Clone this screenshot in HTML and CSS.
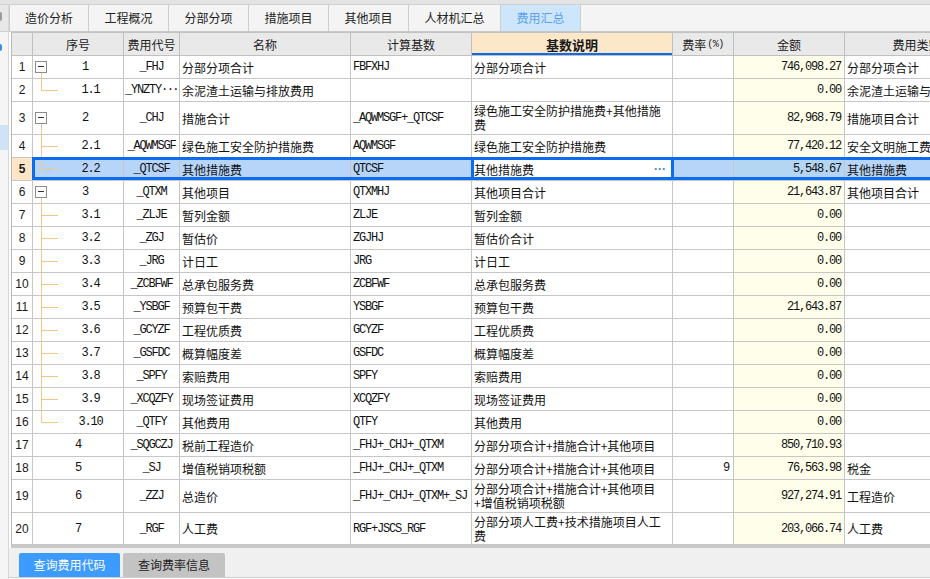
FILE: index.html
```html
<!DOCTYPE html>
<html lang="zh">
<head>
<meta charset="utf-8">
<title>费用汇总</title>
<link rel="stylesheet" href="styles.css">
</head>
<body>
<div class="topstrip"></div>
<div class="layout">
  <aside class="side">
    <div class="side-top"><span class="side-knob"></span></div>
    <span class="side-dot"></span>
    <span class="side-sel"></span>
  </aside>
  <main class="main">
    <nav class="tabbar">
      <div class="tab t80 first">造价分析</div>
      <div class="tab t80">工程概况</div>
      <div class="tab t80">分部分项</div>
      <div class="tab t80">措施项目</div>
      <div class="tab t80">其他项目</div>
      <div class="tab t92">人材机汇总</div>
      <div class="tab t80 active">费用汇总</div>
    </nav>
    <section class="grid">
      <div class="row head">
        <div class="c rh"></div>
        <div class="c hc">序号</div>
        <div class="c hc">费用代号</div>
        <div class="c hc">名称</div>
        <div class="c hc">计算基数</div>
        <div class="c hc focus">基数说明</div>
        <div class="c hc">费率<span class="pct">(%)</span></div>
        <div class="c hc">金额</div>
        <div class="c hc">费用类别</div>
      </div>

      <div class="row">
        <div class="c rh">1</div>
        <div class="c tree open"><span class="tg"></span><span class="sn">1</span></div>
        <div class="c code">_FHJ</div>
        <div class="c name">分部分项合计</div>
        <div class="c base">FBFXHJ</div>
        <div class="c desc">分部分项合计</div>
        <div class="c rate"></div>
        <div class="c amt">746,098.27</div>
        <div class="c type">分部分项合计</div>
      </div>
      <div class="row">
        <div class="c rh">2</div>
        <div class="c tree"><span class="br last"></span><span class="sn">1.1</span></div>
        <div class="c code">_YNZTY<span class="dots">···</span></div>
        <div class="c name">余泥渣土运输与排放费用</div>
        <div class="c base"></div>
        <div class="c desc"></div>
        <div class="c rate"></div>
        <div class="c amt">0.00</div>
        <div class="c type">余泥渣土运输与排放费用</div>
      </div>
      <div class="row tall">
        <div class="c rh">3</div>
        <div class="c tree open"><span class="tg"></span><span class="sn">2</span></div>
        <div class="c code">_CHJ</div>
        <div class="c name">措施合计</div>
        <div class="c base">_AQWMSGF+_QTCSF</div>
        <div class="c desc multi">绿色施工安全防护措施费+其他措施<br>费</div>
        <div class="c rate"></div>
        <div class="c amt">82,968.79</div>
        <div class="c type">措施项目合计</div>
      </div>
      <div class="row">
        <div class="c rh">4</div>
        <div class="c tree"><span class="br"></span><span class="sn">2.1</span></div>
        <div class="c code">_AQWMSGF</div>
        <div class="c name">绿色施工安全防护措施费</div>
        <div class="c base">AQWMSGF</div>
        <div class="c desc">绿色施工安全防护措施费</div>
        <div class="c rate"></div>
        <div class="c amt">77,420.12</div>
        <div class="c type">安全文明施工费</div>
      </div>
      <div class="row sel">
        <div class="c rh">5</div>
        <div class="c tree"><span class="br last"></span><span class="sn">2.2</span></div>
        <div class="c code">_QTCSF</div>
        <div class="c name">其他措施费</div>
        <div class="c base">QTCSF</div>
        <div class="c desc edit"><span class="tx">其他措施费</span><span class="more">···</span></div>
        <div class="c rate"></div>
        <div class="c amt">5,548.67</div>
        <div class="c type">其他措施费</div>
      </div>
      <div class="row">
        <div class="c rh">6</div>
        <div class="c tree open"><span class="tg"></span><span class="sn">3</span></div>
        <div class="c code">_QTXM</div>
        <div class="c name">其他项目</div>
        <div class="c base">QTXMHJ</div>
        <div class="c desc">其他项目合计</div>
        <div class="c rate"></div>
        <div class="c amt">21,643.87</div>
        <div class="c type">其他项目合计</div>
      </div>
      <div class="row">
        <div class="c rh">7</div>
        <div class="c tree"><span class="br"></span><span class="sn">3.1</span></div>
        <div class="c code">_ZLJE</div>
        <div class="c name">暂列金额</div>
        <div class="c base">ZLJE</div>
        <div class="c desc">暂列金额</div>
        <div class="c rate"></div>
        <div class="c amt">0.00</div>
        <div class="c type"></div>
      </div>
      <div class="row">
        <div class="c rh">8</div>
        <div class="c tree"><span class="br"></span><span class="sn">3.2</span></div>
        <div class="c code">_ZGJ</div>
        <div class="c name">暂估价</div>
        <div class="c base">ZGJHJ</div>
        <div class="c desc">暂估价合计</div>
        <div class="c rate"></div>
        <div class="c amt">0.00</div>
        <div class="c type"></div>
      </div>
      <div class="row">
        <div class="c rh">9</div>
        <div class="c tree"><span class="br"></span><span class="sn">3.3</span></div>
        <div class="c code">_JRG</div>
        <div class="c name">计日工</div>
        <div class="c base">JRG</div>
        <div class="c desc">计日工</div>
        <div class="c rate"></div>
        <div class="c amt">0.00</div>
        <div class="c type"></div>
      </div>
      <div class="row">
        <div class="c rh">10</div>
        <div class="c tree"><span class="br"></span><span class="sn">3.4</span></div>
        <div class="c code">_ZCBFWF</div>
        <div class="c name">总承包服务费</div>
        <div class="c base">ZCBFWF</div>
        <div class="c desc">总承包服务费</div>
        <div class="c rate"></div>
        <div class="c amt">0.00</div>
        <div class="c type"></div>
      </div>
      <div class="row">
        <div class="c rh">11</div>
        <div class="c tree"><span class="br"></span><span class="sn">3.5</span></div>
        <div class="c code">_YSBGF</div>
        <div class="c name">预算包干费</div>
        <div class="c base">YSBGF</div>
        <div class="c desc">预算包干费</div>
        <div class="c rate"></div>
        <div class="c amt">21,643.87</div>
        <div class="c type"></div>
      </div>
      <div class="row">
        <div class="c rh">12</div>
        <div class="c tree"><span class="br"></span><span class="sn">3.6</span></div>
        <div class="c code">_GCYZF</div>
        <div class="c name">工程优质费</div>
        <div class="c base">GCYZF</div>
        <div class="c desc">工程优质费</div>
        <div class="c rate"></div>
        <div class="c amt">0.00</div>
        <div class="c type"></div>
      </div>
      <div class="row">
        <div class="c rh">13</div>
        <div class="c tree"><span class="br"></span><span class="sn">3.7</span></div>
        <div class="c code">_GSFDC</div>
        <div class="c name">概算幅度差</div>
        <div class="c base">GSFDC</div>
        <div class="c desc">概算幅度差</div>
        <div class="c rate"></div>
        <div class="c amt">0.00</div>
        <div class="c type"></div>
      </div>
      <div class="row">
        <div class="c rh">14</div>
        <div class="c tree"><span class="br"></span><span class="sn">3.8</span></div>
        <div class="c code">_SPFY</div>
        <div class="c name">索赔费用</div>
        <div class="c base">SPFY</div>
        <div class="c desc">索赔费用</div>
        <div class="c rate"></div>
        <div class="c amt">0.00</div>
        <div class="c type"></div>
      </div>
      <div class="row">
        <div class="c rh">15</div>
        <div class="c tree"><span class="br"></span><span class="sn">3.9</span></div>
        <div class="c code">_XCQZFY</div>
        <div class="c name">现场签证费用</div>
        <div class="c base">XCQZFY</div>
        <div class="c desc">现场签证费用</div>
        <div class="c rate"></div>
        <div class="c amt">0.00</div>
        <div class="c type"></div>
      </div>
      <div class="row">
        <div class="c rh">16</div>
        <div class="c tree"><span class="br last"></span><span class="sn">3.10</span></div>
        <div class="c code">_QTFY</div>
        <div class="c name">其他费用</div>
        <div class="c base">QTFY</div>
        <div class="c desc">其他费用</div>
        <div class="c rate"></div>
        <div class="c amt">0.00</div>
        <div class="c type"></div>
      </div>
      <div class="row">
        <div class="c rh">17</div>
        <div class="c tree"><span class="sn">4</span></div>
        <div class="c code">_SQGCZJ</div>
        <div class="c name">税前工程造价</div>
        <div class="c base">_FHJ+_CHJ+_QTXM</div>
        <div class="c desc">分部分项合计+措施合计+其他项目</div>
        <div class="c rate"></div>
        <div class="c amt">850,710.93</div>
        <div class="c type"></div>
      </div>
      <div class="row">
        <div class="c rh">18</div>
        <div class="c tree"><span class="sn">5</span></div>
        <div class="c code">_SJ</div>
        <div class="c name">增值税销项税额</div>
        <div class="c base">_FHJ+_CHJ+_QTXM</div>
        <div class="c desc">分部分项合计+措施合计+其他项目</div>
        <div class="c rate">9</div>
        <div class="c amt">76,563.98</div>
        <div class="c type">税金</div>
      </div>
      <div class="row tall">
        <div class="c rh">19</div>
        <div class="c tree"><span class="sn">6</span></div>
        <div class="c code">_ZZJ</div>
        <div class="c name">总造价</div>
        <div class="c base">_FHJ+_CHJ+_QTXM+_SJ</div>
        <div class="c desc multi">分部分项合计+措施合计+其他项目<br>+增值税销项税额</div>
        <div class="c rate"></div>
        <div class="c amt">927,274.91</div>
        <div class="c type">工程造价</div>
      </div>
      <div class="row tall2">
        <div class="c rh">20</div>
        <div class="c tree"><span class="sn">7</span></div>
        <div class="c code">_RGF</div>
        <div class="c name">人工费</div>
        <div class="c base">RGF+JSCS_RGF</div>
        <div class="c desc multi">分部分项人工费+技术措施项目人工<br>费</div>
        <div class="c rate"></div>
        <div class="c amt">203,066.74</div>
        <div class="c type">人工费</div>
      </div>
    </section>
    <div class="hscroll"></div>
    <footer class="bottom">
      <div class="btab on">查询费用代码</div>
      <div class="btab">查询费率信息</div>
    </footer>
  </main>
</div>
</body>
</html>
```
FILE: styles.css
```css
* { box-sizing: border-box; }
html, body { margin: 0; padding: 0; }
body {
  width: 930px;
  height: 579px;
  overflow: hidden;
  background: #fafafa;
  font-family: "Noto Sans CJK SC", "Noto Sans", sans-serif;
  font-size: 12px;
  color: #111;
}
.topstrip { height: 4px; background: #e3e3e3; }
.layout { display: flex; height: 575px; }

/* left side strip */
.side {
  width: 9px;
  flex: none;
  border-right: 1px solid #d6d6d6;
  background: #f5f5f5;
  display: flex;
  flex-direction: column;
}
.side-top {
  height: 28px;
  border-top: 1px solid #d0d0d0;
  border-bottom: 1px solid #d0d0d0;
  background: #e8e8e8;
}
.side-knob {
  display: block;
  margin-top: 7px;
  width: 2px;
  height: 9px;
  background: #9a9a9a;
  border-radius: 0 2px 2px 0;
}
.side-dot {
  display: block;
  margin-top: 12px;
  width: 2px;
  height: 7px;
  background: #3b8fe0;
  border-radius: 0 2px 2px 0;
}
.side-sel {
  display: block;
  margin-top: 74px;
  width: 8px;
  height: 25px;
  background: #cfe3f7;
}

.main {
  flex: 1;
  min-width: 0;
  display: flex;
  flex-direction: column;
  background: #fff;
}

/* top tabs */
.tabbar {
  height: 28px;
  flex: none;
  display: flex;
  background: #f4f4f4;
  border-top: 1px solid #d0d0d0;
  border-bottom: 1px solid #c9c9c9;
}
.tab {
  height: 26px;
  line-height: 26px;
  text-align: center;
  color: #222;
  border-right: 1px solid #cdcdcd;
  font-size: 12px;
}
.tab.first { border-left: 1px solid #cdcdcd; }
.t80 { width: 80px; }
.t92 { width: 92px; }
.tab.active { background: #cde6fb; color: #5aa0ec; }

/* grid */
.grid {
  margin-left: 2px;
  border-left: 1px solid #b8b8b8;
  border-top: 1px solid #c2c2c2;
  overflow: hidden;
  flex: none;
}
.row {
  display: grid;
  grid-template-columns: 21px 91px 56px 171px 121px 201px 61px 111px 144px;
  width: max-content;
  height: 23px;
  position: relative;
}
.row.tall { height: 33px; }
.row.tall2 { height: 32px; }
.c {
  border-right: 1px solid #c6c6c6;
  border-bottom: 1px solid #c6c6c6;
  display: flex;
  align-items: center;
  white-space: nowrap;
  overflow: hidden;
  padding: 0 2px;
  min-width: 0;
}
.head .c { background: #e9e9e9; color: #222; justify-content: center; border-color: #c0c0c0; }
.head .focus {
  background: #fde7c9;
  font-weight: bold;
  font-size: 13px;
  color: #1a1a1a;
  box-shadow: inset 0 -2px 0 #0b6cf0;
}
.pct { font-family: "Liberation Mono", monospace; font-size: 10px; margin-left: 1px; letter-spacing: -0.5px; }

.rh {
  justify-content: center;
  padding: 0;
  font-family: "Liberation Sans", "DejaVu Sans", sans-serif;
  font-size: 12px;
  color: #1a1a1a;
}
.code, .base, .amt, .sn, .rate {
  font-family: "Liberation Mono", monospace;
  font-size: 12px;
  letter-spacing: -1.2px;
}
.code { justify-content: center; }
.dots { letter-spacing: -1.5px; }
.amt { justify-content: flex-end; background: #fffeea; padding-right: 3px; }
.rate { justify-content: flex-end; padding-right: 4px; }
.multi { white-space: normal; line-height: 14px; }

/* tree column */
.tree { padding: 0; position: relative; align-items: stretch; }
.sn { flex: 1; display: flex; align-items: center; justify-content: center; }
.tg {
  align-self: center;
  margin-left: 2px;
  width: 12px;
  height: 12px;
  border: 1px solid #8c8c8c;
  background: #fff;
  position: relative;
  flex: none;
}
.tg::before {
  content: "";
  position: absolute;
  left: 2px;
  right: 2px;
  top: 4px;
  height: 1px;
  background: #333;
}
.open::after {
  content: "";
  position: absolute;
  left: 8px;
  top: calc(50% + 6px);
  bottom: -1px;
  width: 1px;
  background: #f7c585;
}
.br { width: 25px; flex: none; position: relative; }
.br::before {
  content: "";
  position: absolute;
  left: 8px;
  top: 0;
  bottom: -1px;
  width: 1px;
  background: #f7c585;
}
.br.last::before { bottom: auto; height: 50%; }
.br::after {
  content: "";
  position: absolute;
  left: 8px;
  width: 17px;
  top: 50%;
  height: 1px;
  background: #f7c585;
}

/* selected row */
.sel .c { background: #b6d5f8; }
.sel .amt { background: #b4d6f2; }
.sel .rh { background: #fde6c7; font-weight: bold; }
.sel::after {
  content: "";
  position: absolute;
  left: 20px;
  right: 0;
  top: -1px;
  bottom: 1px;
  border: 3px solid #0b6cf0;
  pointer-events: none;
}
.edit { position: relative; overflow: visible; }
.sel .edit { background: #fff; }
.edit::before {
  content: "";
  position: absolute;
  left: -1px;
  right: -2px;
  top: -1px;
  bottom: 0;
  border: 3px solid #0b6cf0;
  background: #fff;
}
.edit .tx { position: relative; }
.edit .more {
  position: absolute;
  right: 6px;
  top: 4px;
  color: #3a86d8;
  font-family: "Liberation Sans", sans-serif;
  font-weight: bold;
  letter-spacing: 0;
}

/* bottom */
.hscroll { height: 3px; margin-left: 2px; background: #c8c8c8; flex: none; }
.bottom {
  height: 30px;
  flex: none;
  background: #f0f0f0;
  border-bottom: 1px solid #cfcfcf;
  padding: 5px 0 0 10px;
  display: flex;
  gap: 3px;
}
.btab {
  height: 24px;
  line-height: 24px;
  width: 102px;
  text-align: center;
  background: #c3c3c3;
  color: #222;
  border-radius: 2px 2px 0 0;
  font-size: 12px;
}
.btab.on { width: 101px; background: #3d9bff; color: #fff; }
```
